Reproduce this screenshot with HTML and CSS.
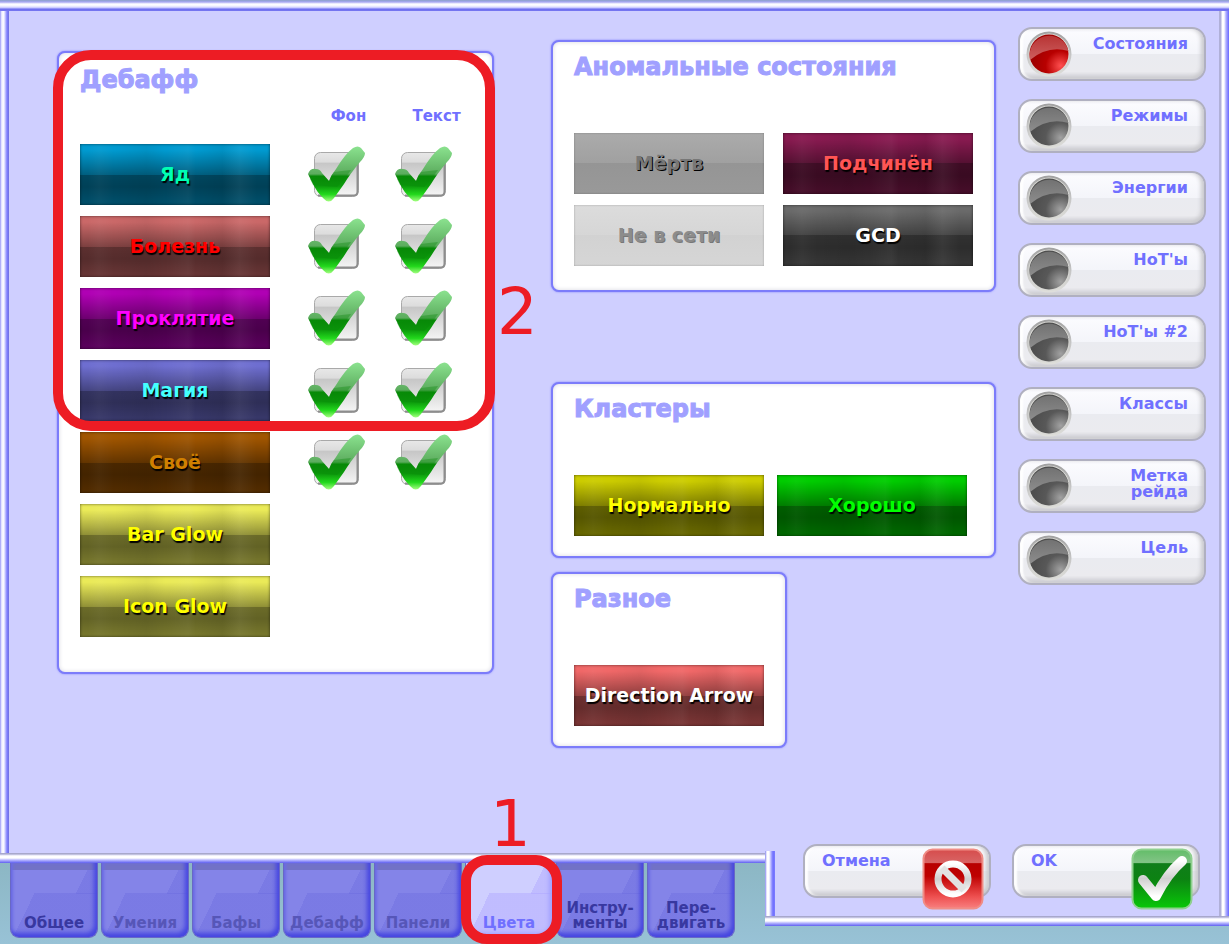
FILE: index.html
```html
<!DOCTYPE html>
<html lang="ru">
<head>
<meta charset="utf-8">
<title>Цвета</title>
<link rel="stylesheet" href="styles.css">
</head>
<body>
<svg class="defs" aria-hidden="true">
  <defs>
    <linearGradient id="box" x1="0" y1="0" x2="0" y2="1"><stop offset="0" stop-color="#e8e8e8"/><stop offset=".22" stop-color="#dcdcdc"/><stop offset=".24" stop-color="#c6c6c6"/><stop offset="1" stop-color="#f6f6f6"/></linearGradient>
    <linearGradient id="tick" x1="0" y1="0" x2="0" y2="1"><stop offset="0" stop-color="#8be28f"/><stop offset=".5" stop-color="#5cac5e"/><stop offset=".54" stop-color="#078a07"/><stop offset=".72" stop-color="#0c9a0c"/><stop offset=".87" stop-color="#22d81c"/><stop offset="1" stop-color="#a4ff80"/></linearGradient>
    <linearGradient id="rim" x1="0" y1="0" x2="0" y2="1"><stop offset="0" stop-color="#a2a2a2"/><stop offset=".5" stop-color="#c4c4c4"/><stop offset="1" stop-color="#dededa"/></linearGradient>
    <radialGradient id="grey" cx=".8" cy=".8" r=".7"><stop offset="0" stop-color="#a2a2a2"/><stop offset=".55" stop-color="#585858"/><stop offset="1" stop-color="#4e4e4e"/></radialGradient>
    <linearGradient id="greyTop" x1="0" y1="0" x2="0" y2="1"><stop offset="0" stop-color="#727272"/><stop offset="1" stop-color="#8d8d8d"/></linearGradient>
    <radialGradient id="red" cx=".8" cy=".8" r=".7"><stop offset="0" stop-color="#ff5050"/><stop offset=".55" stop-color="#b80000"/><stop offset="1" stop-color="#a00000"/></radialGradient>
    <linearGradient id="redTop" x1="0" y1="0" x2="0" y2="1"><stop offset="0" stop-color="#b83434"/><stop offset="1" stop-color="#cd6060"/></linearGradient>
    <linearGradient id="stop" x1="0" y1="0" x2="0" y2="1"><stop offset="0" stop-color="#d64c4c"/><stop offset=".22" stop-color="#d86464"/><stop offset=".24" stop-color="#b80000"/><stop offset=".45" stop-color="#be0000"/><stop offset=".8" stop-color="#ee5050"/><stop offset="1" stop-color="#f88080"/></linearGradient>
    <linearGradient id="go" x1="0" y1="0" x2="0" y2="1"><stop offset="0" stop-color="#62bd68"/><stop offset=".22" stop-color="#82c486"/><stop offset=".24" stop-color="#107d1a"/><stop offset=".5" stop-color="#0c8212"/><stop offset="1" stop-color="#08c808"/></linearGradient>
    <linearGradient id="silver" x1="0" y1="0" x2="0" y2="1"><stop offset="0" stop-color="#fff"/><stop offset=".5" stop-color="#cfcfcf"/><stop offset="1" stop-color="#fff"/></linearGradient>
    <symbol id="check" viewBox="0 0 57 56">
      <rect x="6.5" y="6.500" width="44" height="44" rx="6" fill="url(#box)" stroke="#a9a9a9"/>
      <path d="M10 49.500h36q3.500 0 3.500-4V14" fill="none" stroke="#8d8d8d" stroke-width="2"/>
      <path d="M0 28Q2 22 8 23q4 0 6 4l7 8q2-6 7-12Q37 8 45 2q5-3 8 0l4 5q0 4-5 9Q42 28 36 38L26 52q-5 7-11 0Q9 46 6 40Z" fill="url(#tick)"/>
      <path d="M2 33Q10 31 18 32l3 3q2-6 5-9 7-1 17-2-9 13-14 17L5 39Z" fill="#0a860a" opacity=".35"/>
    </symbol>
    <symbol id="lamp-off" viewBox="0 0 46 46">
      <circle cx="23" cy="23" r="21.500" fill="#d8d8d4" stroke="url(#rim)" stroke-width="2"/>
      <circle cx="23" cy="23" r="19.500" fill="url(#grey)"/>
      <path d="M4 29A19.500 19.500 0 1 1 42.500 20Q22 14 4 29Z" fill="url(#greyTop)"/>
    </symbol>
    <symbol id="lamp-on" viewBox="0 0 46 46">
      <circle cx="23" cy="23" r="21.500" fill="#d8d8d4" stroke="url(#rim)" stroke-width="2"/>
      <circle cx="23" cy="23" r="19.500" fill="url(#red)"/>
      <path d="M4 29A19.500 19.500 0 1 1 42.500 20Q22 14 4 29Z" fill="url(#redTop)"/>
    </symbol>
  </defs>
</svg>

<main class="window">
  <section class="panel debuffs">
    <h2>Дебафф</h2>
    <div class="heads"><span>Фон</span><span>Текст</span></div>
    <div class="rows">
      <div class="row"><button class="swatch poison">Яд</button>
        <label class="tick"><input type="checkbox" checked aria-label="Яд: фон"><svg><use href="#check"/></svg></label>
        <label class="tick"><input type="checkbox" checked aria-label="Яд: текст"><svg><use href="#check"/></svg></label></div>
      <div class="row"><button class="swatch disease">Болезнь</button>
        <label class="tick"><input type="checkbox" checked aria-label="Болезнь: фон"><svg><use href="#check"/></svg></label>
        <label class="tick"><input type="checkbox" checked aria-label="Болезнь: текст"><svg><use href="#check"/></svg></label></div>
      <div class="row"><button class="swatch curse">Проклятие</button>
        <label class="tick"><input type="checkbox" checked aria-label="Проклятие: фон"><svg><use href="#check"/></svg></label>
        <label class="tick"><input type="checkbox" checked aria-label="Проклятие: текст"><svg><use href="#check"/></svg></label></div>
      <div class="row"><button class="swatch magic">Магия</button>
        <label class="tick"><input type="checkbox" checked aria-label="Магия: фон"><svg><use href="#check"/></svg></label>
        <label class="tick"><input type="checkbox" checked aria-label="Магия: текст"><svg><use href="#check"/></svg></label></div>
      <div class="row"><button class="swatch own">Своё</button>
        <label class="tick"><input type="checkbox" checked aria-label="Своё: фон"><svg><use href="#check"/></svg></label>
        <label class="tick"><input type="checkbox" checked aria-label="Своё: текст"><svg><use href="#check"/></svg></label></div>
      <div class="row"><button class="swatch glow">Bar Glow</button></div>
      <div class="row"><button class="swatch glow">Icon Glow</button></div>
    </div>
    <div class="mark mark-debuffs"></div>
    <span class="digit digit-two">2</span>
  </section>

  <div class="middle">
    <section class="panel states">
      <h2>Аномальные состояния</h2>
      <div class="pairs">
        <button class="swatch dead">Мёртв</button>
        <button class="swatch charmed">Подчинён</button>
        <button class="swatch offline">Не в сети</button>
        <button class="swatch gcd">GCD</button>
      </div>
    </section>
    <section class="panel clusters">
      <h2>Кластеры</h2>
      <div class="pairs tight">
        <button class="swatch normal">Нормально</button>
        <button class="swatch good">Хорошо</button>
      </div>
    </section>
    <section class="panel misc">
      <h2>Разное</h2>
      <div class="pairs">
        <button class="swatch arrow">Direction Arrow</button>
      </div>
    </section>
  </div>

  <nav class="pages">
    <button class="pill"><svg class="lamp"><use href="#lamp-on"/></svg><span>Состояния</span></button>
    <button class="pill"><svg class="lamp"><use href="#lamp-off"/></svg><span>Режимы</span></button>
    <button class="pill"><svg class="lamp"><use href="#lamp-off"/></svg><span>Энергии</span></button>
    <button class="pill"><svg class="lamp"><use href="#lamp-off"/></svg><span>HoT'ы</span></button>
    <button class="pill"><svg class="lamp"><use href="#lamp-off"/></svg><span>HoT'ы #2</span></button>
    <button class="pill"><svg class="lamp"><use href="#lamp-off"/></svg><span>Классы</span></button>
    <button class="pill"><svg class="lamp"><use href="#lamp-off"/></svg><span>Метка<br>рейда</span></button>
    <button class="pill"><svg class="lamp"><use href="#lamp-off"/></svg><span>Цель</span></button>
  </nav>
</main>

<footer class="foot">
  <nav class="tabs">
    <button class="tab">Общее</button>
    <button class="tab dim">Умения</button>
    <button class="tab dim">Бафы</button>
    <button class="tab dim">Дебафф</button>
    <button class="tab dim">Панели</button>
    <div class="tab-holder">
      <button class="tab current">Цвета</button>
      <div class="mark mark-tab"></div>
      <span class="digit digit-one">1</span>
    </div>
    <button class="tab">Инстру-<br>менты</button>
    <button class="tab">Пере-<br>двигать</button>
  </nav>
  <div class="actions">
    <button class="pill action"><span>Отмена</span>
      <svg class="badge" viewBox="0 0 62 62">
        <rect x="1.500" y="1.500" width="59" height="59" rx="9" fill="url(#stop)" stroke="#ef8d86" stroke-width="2"/>
        <circle cx="31" cy="31" r="15" fill="none" stroke="url(#silver)" stroke-width="7"/>
        <path d="M20 20 42 42" stroke="#e2e2e2" stroke-width="7"/>
      </svg>
    </button>
    <button class="pill action"><span>OK</span>
      <svg class="badge" viewBox="0 0 62 62">
        <rect x="1.500" y="1.500" width="59" height="59" rx="9" fill="url(#go)" stroke="#8fd08f" stroke-width="2"/>
        <path d="M12 32 25 48Q36 26 51 13" fill="none" stroke="url(#silver)" stroke-width="10" stroke-linecap="round" stroke-linejoin="round"/>
      </svg>
    </button>
  </div>
</footer>
</body>
</html>
```
FILE: styles.css
```css
* { box-sizing: border-box; }

body {
  margin: 0;
  min-height: 100vh;
  display: flex;
  flex-direction: column;
  background: linear-gradient(#8ab5c1 90%, #98c2d6);
  font-family: "DejaVu Sans", "Noto Sans", sans-serif;
  font-weight: 700;
}

button { font: inherit; border: 0; padding: 0; margin: 0; cursor: pointer; }
h2 {
  margin: 0;
  font-size: 24px;
  line-height: 28px;
  font-weight: 700;
  color: #a0a0ff;
  white-space: nowrap;
  -webkit-text-stroke: 1px #a0a0ff;
}
.defs { position: absolute; width: 0; height: 0; }

.window {
  flex: 1;
  display: grid;
  grid-template-columns: minmax(0, 494fr) minmax(0, 467fr) minmax(0, 188fr);
  align-items: start;
  padding: 27px 23px 28px 57px;
  background:
    linear-gradient(#8aa0c8, #a8a8f4 2px, #fff 4px, #f4f4ff 6px, #c0c0ff 8px, #6c6cf0 9px, #7878f0 11px) top / 100% 11px no-repeat,
    linear-gradient(#a8a8cc 1px, #dcdcf4 2px, #fff 3px, #fff 5px, #b8b8ff 7px, #6060f0 10px) bottom / 100% 10px no-repeat,
    linear-gradient(90deg, #8888f0, #d8d8ff 1px, #fff 3px, #f4f4ff 4px, #8080ff 7px, #7070e0 9px) left / 9px 100% no-repeat,
    linear-gradient(90deg, #b0b0d8 2px, #fff 3px, #fff 5px, #b0b0ff 7px, #6868ff 10px) right / 10px 100% no-repeat,
    #cfcfff;
}

.panel {
  position: relative;
  background: #fff;
  border: 2px solid #7c7cfa;
  border-radius: 8px;
  box-shadow: 0 0 2px #7c7cfa, inset 0 0 4px #d8d8e0;
}
.debuffs { margin: 24px 57px 0 0; padding: 13px 21px 35px; }
.middle { margin: 13px 22px 0 0; display: flex; flex-direction: column; align-items: flex-start; }
.states, .clusters, .misc { padding: 11px 21px 24px; }
.states, .clusters { width: 100%; }
.states { margin-bottom: 90px; }
.clusters, .misc { padding-bottom: 20px; }
.clusters { margin-bottom: 14px; }

.heads {
  display: grid;
  grid-template-columns: 57px 57px;
  column-gap: 31px;
  margin: 13px 0 19px 240px;
  font-size: 15px;
  line-height: 18px;
  text-align: center;
  color: #7070ff;
}
.rows { display: grid; gap: 11px; }
.row { display: grid; grid-template-columns: 190px 57px 57px; align-items: start; }
.row .tick:nth-child(2) { margin-left: 38px; }
.row .tick:nth-child(3) { margin-left: 68px; }
.tick { position: relative; width: 57px; height: 56px; margin-top: 2px; }
.tick input { position: absolute; inset: 0; width: 100%; height: 100%; margin: 0; opacity: 0; }
.tick svg { display: block; width: 57px; height: 56px; }

.pairs { display: grid; grid-template-columns: 190px 190px; gap: 11px 19px; margin-top: 52px; }
.tight { column-gap: 13px; }
.misc .pairs { grid-template-columns: 190px; }

.swatch {
  width: 190px;
  height: 61px;
  padding-bottom: 2px;
  font-size: 19px;
  line-height: 24px;
  white-space: nowrap;
  text-shadow: 1px 2px 1px #000;
  box-shadow: inset 0 0 3px rgba(0, 0, 0, .6);
  background-image:
    linear-gradient(90deg, transparent 4%, rgba(255, 255, 255, .03) 10%, transparent 18%, rgba(0, 0, 0, .05) 35%, transparent 45%, rgba(255, 255, 255, .04) 57%, transparent 61%, rgba(0, 0, 0, .06) 75%, rgba(255, 255, 255, .05) 84%, transparent 93%),
    linear-gradient(transparent 10%, rgba(0, 0, 0, .38) 50%, rgba(0, 0, 0, .54) 50%, rgba(0, 0, 0, .58) 70%, rgba(0, 0, 0, .48));
}
.poison { background-color: #009ad0; color: #00ffb4; }
.disease { background-color: #ca6868; color: #f00; }
.curse { background-color: #b000b4; color: #f0f; }
.magic { background-color: #6e6ed0; color: #4ff; }
.own { background-color: #a05500; color: #d08000; }
.glow { background-color: #eaea58; color: #ff0; }
.charmed { background-color: #881a50; color: #ff5555; }
.gcd { background-color: #6a6a6a; color: #fff; }
.normal { background-color: #cccc00; color: #ff0; }
.good { background-color: #00cc00; color: #0f0; }
.arrow { background-color: #f06868; color: #fff; }
.dead, .offline { box-shadow: inset 0 0 2px rgba(0, 0, 0, .3); }
.dead { background: linear-gradient(#ababab, #a0a0a0 50%, #959595 50%, #999); color: #777; text-shadow: 1px 1px 0 #000; }
.offline { background: linear-gradient(#dcdcdc, #d6d6d6 50%, #d2d2d2 50%, #d6d6d6); color: #8c8c8c; text-shadow: 1px 1px 0 #777; }

.pages { display: flex; flex-direction: column; gap: 18px; }
.pill {
  display: flex;
  align-items: flex-start;
  justify-content: space-between;
  width: 100%;
  height: 54px;
  padding: 2px 16px 0 6px;
  border: 2px solid #b0b0c0;
  border-radius: 14px;
  background: linear-gradient(#fcfcff, #f4f5fa 49%, #eaebf0 51%, #ebebef 85%, #cdcdd2);
  box-shadow: inset -3px -1px 4px #c8c8cc, inset 3px 0 2px #fff;
  color: #7070ff;
  font-size: 16px;
  line-height: 16px;
  text-align: right;
  white-space: nowrap;
}
.pill span { padding-top: 5px; }
.lamp { width: 46px; height: 46px; flex: none; }

.foot { display: flex; align-items: flex-start; justify-content: space-between; min-height: 81px; }
.tabs { display: flex; gap: 3px; padding-left: 10px; }
.tab, .tab-holder { width: 88px; height: 75px; }
.tab-holder { position: relative; }
.tab {
  display: flex;
  align-items: flex-end;
  justify-content: center;
  padding-bottom: 6px;
  font-size: 15px;
  line-height: 15px;
  white-space: nowrap;
  color: #3838a0;
  border: 1px solid #6868c4;
  border-top: 0;
  border-radius: 0 0 9px 9px;
  background:
    linear-gradient(#7272c6 7px, transparent 7px),
    linear-gradient(116deg, transparent 79%, rgba(100, 100, 220, .3) 79%) top / 100% 31px no-repeat,
    linear-gradient(116deg, transparent 22%, rgba(100, 100, 220, .3) 22%) bottom / 100% 44px no-repeat,
    #8484e8;
  box-shadow: inset -3px -4px 4px #4646e0, inset 2px 0 3px #6c6ce4;
}
.dim { color: #5656b8; }
.current {
  color: #7070ff;
  background:
    linear-gradient(116deg, transparent 79%, rgba(170, 160, 255, .4) 79%) top / 100% 31px no-repeat,
    linear-gradient(116deg, transparent 22%, rgba(170, 160, 255, .4) 22%) bottom / 100% 44px no-repeat,
    #cfcfff;
  box-shadow: inset -3px -4px 4px #a0a0ff;
}

.actions {
  position: relative;
  display: flex;
  gap: 21px;
  width: 464px;
  height: 75px;
  margin-top: -12px;
  padding: 0 29px 0 38px;
  background:
    linear-gradient(#a8a8cc 1px, #dcdcf4 2px, #fff 3px, #fff 5px, #b8b8ff 7px, #6060f0 10px) bottom / 100% 10px no-repeat,
    linear-gradient(90deg, #8888f0, #fff 2px, #fff 4px, #b0b0ff 6px, #7070ff 8px, #7c7cff 10px) left / 10px 100% no-repeat,
    linear-gradient(90deg, #b0b0d8 2px, #fff 3px, #fff 5px, #b0b0ff 7px, #6868ff 10px) right / 10px 100% no-repeat,
    #cfcfff;
}
.action { margin-top: -7px; padding: 2px 5px 0 17px; }
.badge { width: 62px; height: 62px; flex: none; }

.mark { position: absolute; border: 10px solid #ed1c24; pointer-events: none; }
.mark-debuffs { top: -3px; left: -6px; right: -3px; height: 381px; border-radius: 38px; }
.mark-tab { top: -8px; left: -4px; width: 101px; height: 89px; border-radius: 26px; }
.digit {
  position: absolute;
  font-family: "DejaVu Sans", sans-serif;
  font-weight: 400;
  font-size: 64px;
  line-height: 64px;
  color: #ed1c24;
}
.digit-two { left: calc(100% + 5px); top: 227px; }
.digit-one { left: 25px; top: -71px; }
```
